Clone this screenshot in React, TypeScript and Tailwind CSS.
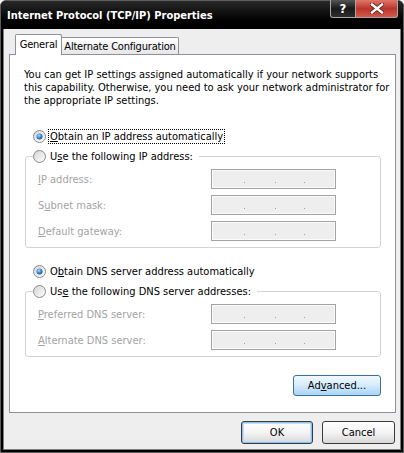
import React from 'react';

function Radio({ id, checked }: { id: string; checked?: boolean }) {
  return (
    <svg width="13" height="13" viewBox="0 0 13 13" className="shrink-0">
      <defs>
        <linearGradient id={`${id}-f`} x1="0" y1="0" x2="1" y2="1">
          <stop offset="0" stopColor="#d4d4d4" />
          <stop offset="1" stopColor="#ffffff" />
        </linearGradient>
        <radialGradient id={`${id}-d`} cx="0.4" cy="0.35" r="0.7">
          <stop offset="0" stopColor="#b4e2ff" />
          <stop offset="0.5" stopColor="#3b8fd6" />
          <stop offset="1" stopColor="#164f8c" />
        </radialGradient>
      </defs>
      <circle cx="6.5" cy="6.5" r="6" fill={`url(#${id}-f)`} stroke="#8b8b8b" />
      {checked && <circle cx="6.5" cy="6.5" r="3" fill={`url(#${id}-d)`} />}
    </svg>
  );
}

function IpBox() {
  return (
    <div className="h-[20px] w-[125px] border border-[#a3a3a3] bg-[#eeeeee] shadow-[inset_0_0_0_1px_#fbfbfb] flex items-end pb-[5px] pl-[32px]">
      <span className="w-[1px] h-[1px] bg-[#a0a0a0]" />
      <span className="ml-[30px] w-[1px] h-[1px] bg-[#a0a0a0]" />
      <span className="ml-[28px] w-[1px] h-[1px] bg-[#a0a0a0]" />
    </div>
  );
}

function Field({ label }: { label: React.ReactNode }) {
  return (
    <>
      <div className="pl-[5px] text-[#a3a3a3]">{label}</div>
      <IpBox />
    </>
  );
}

function Legend({ id, children }: { id: string; children: React.ReactNode }) {
  return (
    <legend className="h-[16px] pr-[4px] bg-white">
      <div className="flex items-center h-[16px] gap-[2px]">
        <Radio id={id} />
        <span className="border border-transparent px-[1px] leading-[13px]">{children}</span>
      </div>
    </legend>
  );
}

export default function App() {
  return (
    <div className="w-[404px] h-[453px] bg-black border border-[#5c5c5c] rounded-t-[6px] flex flex-col font-['DejaVu_Sans_Condensed','Liberation_Sans',sans-serif] text-[11px] text-black select-none">
      {/* title bar */}
      <div className="h-[28px] shrink-0 flex items-start rounded-t-[6px] bg-gradient-to-b from-[#2a2a2a] via-[#0c0c0c] to-[#000000]">
        <div className="pl-[6px] pt-[8px] text-white font-bold leading-[13px]">Internet Protocol (TCP/IP) Properties</div>
        <div className="ml-auto mr-[5px] -mt-[1px] flex">
          <div className="w-[26px] h-[18px] rounded-bl-[3px] border border-t-0 border-[#a8a8a8] bg-gradient-to-b from-[#555555] via-[#1a1a1a] to-[#2e2e2e] flex items-center justify-center text-white font-bold text-[13px] leading-none">?</div>
          <div className="w-[42px] h-[18px] rounded-br-[3px] border border-t-0 border-l-0 border-[#a8a8a8] bg-gradient-to-b from-[#e2766a] via-[#b8362a] to-[#d4584a] flex items-center justify-center">
            <svg width="14" height="11" viewBox="0 0 14 11">
              <path d="M2 1.5 L12 9.5 M12 1.5 L2 9.5" stroke="#5a1a14" strokeWidth="4" strokeLinecap="square" />
              <path d="M2 1.5 L12 9.5 M12 1.5 L2 9.5" stroke="#ffffff" strokeWidth="2.4" strokeLinecap="square" />
            </svg>
          </div>
        </div>
      </div>

      {/* body */}
      <div className="flex-1 mx-[2px] mb-[2px] border border-t-0 border-[#7c7c7c] bg-[#eeeeee] pl-[5px] pt-[5px]">
        {/* tabs */}
        <div className="h-[20px] flex items-end pl-[6px] tracking-[-0.2px]">
          <div className="relative z-10 h-[21px] w-[47px] -mb-[1px] bg-white border border-b-0 border-[#8f909a] rounded-t-[2px] flex justify-center pt-[3px] leading-[13px]">
            General
          </div>
          <div className="h-[17px] w-[117px] border border-l-0 border-b-0 border-[#8f909a] rounded-tr-[2px] bg-gradient-to-b from-white to-[#e6e6e6] flex justify-center pt-[2px] leading-[13px]">
            Alternate Configuration
          </div>
        </div>

        {/* panel */}
        <div className="h-[359px] w-[387px] border border-[#8f909a] bg-white flex flex-col">
          <p className="pt-[13px] pl-[14px] leading-[13px]">
            You can get IP settings assigned automatically if your network supports
            <br />
            this capability. Otherwise, you need to ask your network administrator for
            <br />
            the appropriate IP settings.
          </p>

          <div className="mt-[21px] h-[16px] flex items-center pl-[23px] gap-[2px]">
            <Radio id="r1" checked />
            <span className="border border-dotted border-black px-[1px] leading-[13px]">
              <u>O</u>btain an IP address automatically
            </span>
          </div>

          <fieldset className="mt-[4px] ml-[15px] w-[356px] border border-[#d3d3d3] rounded-[3px] pl-[7px] pb-[6px]">
            <Legend id="r2">
              U<u>s</u>e the following IP address:
            </Legend>
            <div className="mt-[5px] grid grid-cols-[178px_125px] gap-y-[6px] items-center leading-[13px]">
              <Field label={<><u>I</u>P address:</>} />
              <Field label={<>S<u>u</u>bnet mask:</>} />
              <Field label={<><u>D</u>efault gateway:</>} />
            </div>
          </fieldset>

          <div className="mt-[15px] h-[16px] flex items-center pl-[23px] gap-[2px]">
            <Radio id="r3" checked />
            <span className="border border-transparent px-[1px] leading-[13px]">
              O<u>b</u>tain DNS server address automatically
            </span>
          </div>

          <fieldset className="mt-[4px] ml-[15px] w-[356px] border border-[#d3d3d3] rounded-[3px] pl-[7px] pb-[6px]">
            <Legend id="r4">
              Us<u>e</u> the following DNS server addresses:
            </Legend>
            <div className="mt-[5px] grid grid-cols-[178px_125px] gap-y-[6px] items-center leading-[13px]">
              <Field label={<><u>P</u>referred DNS server:</>} />
              <Field label={<><u>A</u>lternate DNS server:</>} />
            </div>
          </fieldset>

          <div className="mt-[18px] flex justify-end pr-[14px]">
            <button className="w-[88px] h-[21px] rounded-[3px] border border-[#3c6f99] bg-gradient-to-b from-[#f2f9fe] via-[#d4ebfb] to-[#a9d4f4] leading-[13px]">
              Ad<u>v</u>anced...
            </button>
          </div>
        </div>

        {/* dialog buttons */}
        <div className="mt-[8px] flex justify-end gap-[9px] pr-[5px]">
          <button className="w-[72px] h-[23px] rounded-[3px] border border-[#3a3a3a] bg-gradient-to-b from-white via-[#f4f4f4] to-[#d8d8d8] shadow-[inset_0_0_0_1px_#8cc2ef,inset_0_0_0_2px_#c2ddf5] leading-[13px]">
            OK
          </button>
          <button className="w-[73px] h-[23px] rounded-[3px] border border-[#3a3a3a] bg-gradient-to-b from-white via-[#f4f4f4] to-[#d8d8d8] leading-[13px]">
            Cancel
          </button>
        </div>
      </div>
    </div>
  );
}
